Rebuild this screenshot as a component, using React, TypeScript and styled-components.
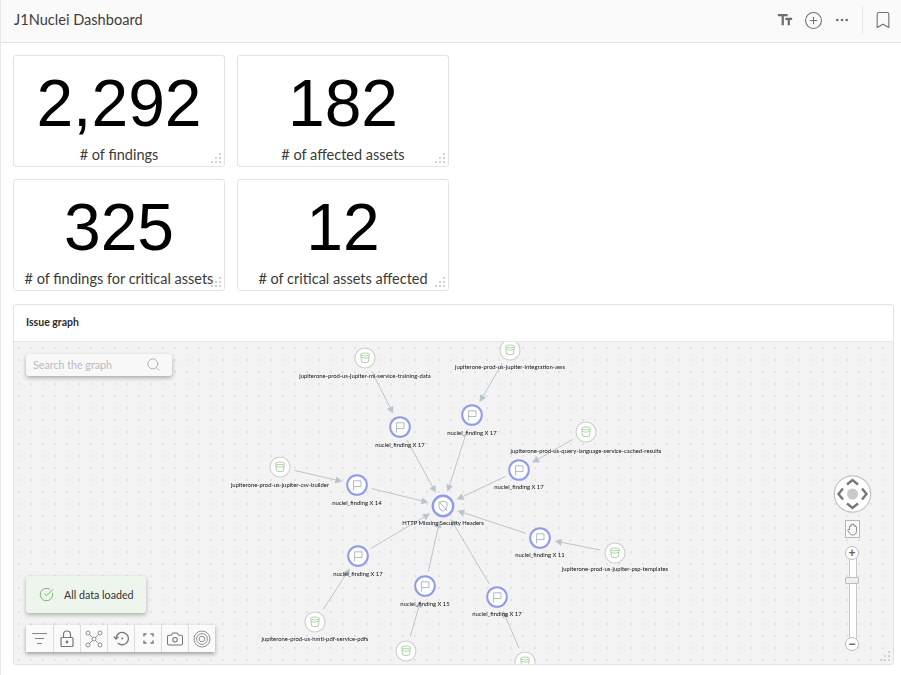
import { ReactNode } from 'react';
import styled, { createGlobalStyle } from 'styled-components';
import { Bookmark, Camera, CircleCheckBig, CirclePlus, Ellipsis, ListFilter, Search } from 'lucide-react';
import { MdTextFields } from 'react-icons/md';

const GlobalStyle = createGlobalStyle`
  html, body {
    margin: 0;
    padding: 0;
    background: #fff;
    font-family: Lato, "Open Sans", sans-serif;
    color: #333;
  }
  * { box-sizing: border-box; }
`;

const Page = styled.div`
  width: 901px;
  height: 675px;
  overflow: hidden;
  border-left: 1px solid #e8e8e8;
`;

const Header = styled.header`
  height: 43px;
  background: #fafafa;
  border-bottom: 1px solid #e2e2e2;
  display: flex;
  align-items: center;
  padding: 0 8px 2px 13px;
`;

const Title = styled.h1`
  flex: 1;
  margin: 0 0 1px;
  font-size: 14.6px;
  font-weight: 400;
  color: #3d3d3d;
`;

const HeaderActions = styled.div`
  display: flex;
  align-items: center;
  color: #6f6f6f;
`;

const HeaderAction = styled.span<{ $gap: number }>`
  display: flex;
  margin-right: ${(p) => p.$gap}px;
`;

const HeaderDivider = styled.span`
  width: 1px;
  height: 26px;
  background: #e2e2e2;
  margin-right: 10px;
`;

const Content = styled.main`
  padding: 12px 0 0 12px;
`;

const CardGrid = styled.section`
  display: grid;
  grid-template-columns: 212px 212px;
  grid-auto-rows: 112px;
  gap: 12px;
`;

const Card = styled.article`
  position: relative;
  border: 1px solid #e3e3e3;
  border-radius: 3px;
  background: #fff;
  display: flex;
  flex-direction: column;
  align-items: center;
  padding-top: 14px;
`;

const CardValue = styled.div`
  font-family: "Liberation Sans", Arial, sans-serif;
  font-size: 66px;
  line-height: 66px;
  color: #000;
`;

const CardLabel = styled.div`
  margin-top: 9px;
  font-size: 14.5px;
  line-height: 20px;
  color: #3a3a3a;
  white-space: nowrap;
`;

const ResizeMark = styled.svg`
  position: absolute;
  right: 3px;
  bottom: 3px;
  width: 10px;
  height: 10px;
  color: #cfd0dc;
`;

const GraphPanel = styled.section`
  position: relative;
  width: 881px;
  height: 361px;
  margin-top: 13px;
  border: 1px solid #e3e3e3;
  border-radius: 3px;
  overflow: hidden;
`;

const PanelHeading = styled.h2`
  height: 37px;
  margin: 0;
  padding: 0 12px;
  font-size: 10.5px;
  font-weight: 700;
  line-height: 34px;
  color: #2d2d2d;
  border-bottom: 1px solid #e6e6e6;
`;

const Canvas = styled.div`
  position: relative;
  height: 322px;
  background-color: #f3f3f3;
  background-image: radial-gradient(circle, #e3e3e3 0.8px, transparent 1px);
  background-size: 12px 12px;
  background-position: 11px 0;
  overflow: hidden;
`;

const GraphSvg = styled.svg`
  display: block;
  width: 879px;
  height: 322px;
  filter: blur(0.3px);
`;

const NodeLabel = styled.text`
  font-family: Lato, sans-serif;
  font-size: 5.9px;
  fill: #111;
  text-anchor: middle;
`;

const SearchBox = styled.div`
  position: absolute;
  left: 12px;
  top: 12px;
  width: 146px;
  height: 22px;
  display: flex;
  align-items: center;
  justify-content: space-between;
  padding: 0 11px 2px 7px;
  background: #f8f8f8;
  border-radius: 3px;
  box-shadow: 0 2px 4px rgba(0, 0, 0, 0.3);
  font-size: 10.7px;
  color: #b9bcc0;
`;

const Toast = styled.div`
  position: absolute;
  left: 12px;
  top: 234px;
  width: 120px;
  height: 37px;
  display: flex;
  align-items: center;
  gap: 10px;
  padding: 0 0 1px 13px;
  background: #eef5ed;
  border-radius: 3px;
  box-shadow: 0 2px 4px rgba(0, 0, 0, 0.28);
  font-size: 10.7px;
  color: #333;
`;

const Toolbar = styled.div`
  position: absolute;
  left: 12px;
  top: 283px;
  display: flex;
  background: #fafafa;
  box-shadow: 0 2px 4px rgba(0, 0, 0, 0.35);
`;

const ToolButton = styled.span`
  width: 27px;
  height: 27px;
  display: flex;
  align-items: center;
  justify-content: center;
  color: #777;
  border-left: 1px solid #dcdcdc;
  &:first-child { border-left: none; }
`;

const NavControls = styled.div`
  position: absolute;
  right: 21px;
  top: 133px;
  width: 40px;
  display: flex;
  flex-direction: column;
  align-items: center;
`;

const HandBox = styled.span`
  width: 15px;
  height: 18px;
  margin-top: 7px;
  display: flex;
  align-items: center;
  justify-content: center;
  border: 1px solid #b8b8b8;
  background: #f8f8f8;
`;

const ZoomSlider = styled.div`
  position: relative;
  height: 105px;
  width: 14px;
  margin-top: 8px;
  display: flex;
  flex-direction: column;
  align-items: center;
  justify-content: space-between;
  &::before {
    content: '';
    position: absolute;
    top: 6px;
    bottom: 6px;
    left: 4px;
    width: 6px;
    background: #fff;
    border: 1px solid #c8c8c8;
    border-width: 0 1px;
  }
`;

const ZoomButton = styled.span`
  position: relative;
  width: 14px;
  height: 14px;
  border-radius: 50%;
  border: 1px solid #bdbdbd;
  background: #fff;
  display: flex;
  align-items: center;
  justify-content: center;
  font-family: "Liberation Sans", sans-serif;
  font-size: 12px;
  line-height: 1;
  font-weight: 700;
  color: #666;
`;

const ZoomThumb = styled.span`
  position: absolute;
  left: 0;
  top: 31px;
  width: 14px;
  height: 7px;
  background: #eee;
  border: 1px solid #bdbdbd;
  border-radius: 1px;
`;

type NodeKind = 'bucket' | 'finding' | 'issue';

type GraphNode = {
  id: string;
  kind: NodeKind;
  x: number;
  y: number;
  label?: string;
  labelY?: number;
};

const nodes: GraphNode[] = [
  { id: 'issue', kind: 'issue', x: 443, y: 506, label: 'HTTP Missing Security Headers', labelY: 523 },
  { id: 'f1', kind: 'finding', x: 400, y: 427, label: 'nuclei_finding X 17', labelY: 445 },
  { id: 'f2', kind: 'finding', x: 472, y: 415, label: 'nuclei_finding X 17', labelY: 433 },
  { id: 'f3', kind: 'finding', x: 519, y: 470, label: 'nuclei_finding X 17', labelY: 487 },
  { id: 'f4', kind: 'finding', x: 357, y: 485, label: 'nuclei_finding X 14', labelY: 503 },
  { id: 'f5', kind: 'finding', x: 540, y: 538, label: 'nuclei_finding X 11', labelY: 555 },
  { id: 'f6', kind: 'finding', x: 358, y: 556, label: 'nuclei_finding X 17', labelY: 574 },
  { id: 'f7', kind: 'finding', x: 425, y: 586, label: 'nuclei_finding X 15', labelY: 604 },
  { id: 'f8', kind: 'finding', x: 497, y: 597, label: 'nuclei_finding X 17', labelY: 614 },
  { id: 'b1', kind: 'bucket', x: 365, y: 358, label: 'jupiterone-prod-us-jupiter-ml-service-training-data', labelY: 376 },
  { id: 'b2', kind: 'bucket', x: 510, y: 350, label: 'jupiterone-prod-us-jupiter-integration-aws', labelY: 367 },
  { id: 'b3', kind: 'bucket', x: 586, y: 432, label: 'jupiterone-prod-us-query-language-service-cached-results', labelY: 451 },
  { id: 'b4', kind: 'bucket', x: 280, y: 467, label: 'jupiterone-prod-us-jupiter-csv-builder', labelY: 485 },
  { id: 'b5', kind: 'bucket', x: 615, y: 553, label: 'jupiterone-prod-us-jupiter-psp-templates', labelY: 569 },
  { id: 'b6', kind: 'bucket', x: 315, y: 622, label: 'jupiterone-prod-us-hmtl-pdf-service-pdfs', labelY: 639 },
  { id: 'b7', kind: 'bucket', x: 406, y: 651 },
  { id: 'b8', kind: 'bucket', x: 525, y: 662 },
];

const edges: [string, string][] = [
  ['b1', 'f1'], ['b2', 'f2'], ['b3', 'f3'], ['b4', 'f4'],
  ['b5', 'f5'], ['b6', 'f6'], ['b7', 'f7'], ['b8', 'f8'],
  ['f1', 'issue'], ['f2', 'issue'], ['f3', 'issue'], ['f4', 'issue'],
  ['f5', 'issue'], ['f6', 'issue'], ['f7', 'issue'], ['f8', 'issue'],
];

const nodeById = (id: string) => nodes.find((n) => n.id === id) as GraphNode;

const Edge = ({ from, to }: { from: GraphNode; to: GraphNode }) => {
  const dx = to.x - from.x;
  const dy = to.y - from.y;
  const len = Math.hypot(dx, dy);
  const ux = dx / len;
  const uy = dy / len;
  const x1 = from.x + ux * 15;
  const y1 = from.y + uy * 15;
  const tipX = to.x - ux * 15;
  const tipY = to.y - uy * 15;
  const baseX = tipX - ux * 7;
  const baseY = tipY - uy * 7;
  const arrow = `${tipX},${tipY} ${baseX - uy * 3.5},${baseY + ux * 3.5} ${baseX + uy * 3.5},${baseY - ux * 3.5}`;
  return (
    <g>
      <line x1={x1} y1={y1} x2={baseX} y2={baseY} stroke="#b9c5cd" strokeWidth={1} />
      <polygon points={arrow} fill="#b9c5cd" />
    </g>
  );
};

const BucketGlyph = () => (
  <g fill="none" stroke="#8fc482" strokeWidth={0.7}>
    <ellipse cx={0} cy={-3.6} rx={4.4} ry={1.4} />
    <path d="M-4.4 -3.6 L-3.4 4 Q0 5.4 3.4 4 L4.4 -3.6" />
    <path d="M-4 -0.6 Q0 1 4 -0.6" />
  </g>
);

const FlagGlyph = () => (
  <g fill="none" stroke="#9aa8b5" strokeWidth={0.8}>
    <path d="M-3.4 5.5 V-4.2 H4 V1.6 H-3.4" />
  </g>
);

const IssueGlyph = () => (
  <g fill="none" stroke="#98a1ab" strokeWidth={0.8}>
    <path d="M0 -5 L4 -3.4 V0.4 Q4 3.6 0 5.2 Q-4 3.6 -4 0.4 V-3.4 Z" />
    <path d="M-4.2 -4.6 L4.2 4.8" />
  </g>
);

const Node = ({ node }: { node: GraphNode }) => {
  const t = `translate(${node.x} ${node.y})`;
  return (
    <g>
      {node.kind === 'bucket' && (
        <g transform={t}>
          <circle r={10} fill="#fff" stroke="#cdcfcd" strokeWidth={1.1} />
          <BucketGlyph />
        </g>
      )}
      {node.kind === 'finding' && (
        <g transform={t}>
          <circle cx={-1.5} r={10} fill="#fff" stroke="#e6e6e6" strokeWidth={0.6} />
          <circle r={9.8} fill="#fff" stroke="#8f9bea" strokeWidth={2} />
          <FlagGlyph />
        </g>
      )}
      {node.kind === 'issue' && (
        <g transform={t}>
          <circle r={10.2} fill="#fff" stroke="#8f9bea" strokeWidth={2.4} />
          <IssueGlyph />
        </g>
      )}
      {node.label && (
        <NodeLabel x={node.x} y={(node.labelY as number) + 2}>
          {node.label}
        </NodeLabel>
      )}
    </g>
  );
};

const Handle = () => (
  <ResizeMark viewBox="0 0 10 10">
    <g fill="currentColor">
      <rect x="8" y="0" width="2" height="2" />
      <rect x="4" y="4" width="2" height="2" />
      <rect x="8" y="4" width="2" height="2" />
      <rect x="0" y="8" width="2" height="2" />
      <rect x="4" y="8" width="2" height="2" />
      <rect x="8" y="8" width="2" height="2" />
    </g>
  </ResizeMark>
);

const LockIcon = () => (
  <svg width="16" height="18" viewBox="0 0 16 18" fill="none" stroke="currentColor" strokeWidth="1.2">
    <rect x="2" y="7.5" width="12" height="9" rx="1" />
    <path d="M4.5 7.5V4.5a3.5 3.5 0 0 1 7 0v3" />
    <circle cx="8" cy="12" r="0.8" fill="currentColor" />
  </svg>
);

const NetworkIcon = () => (
  <svg width="18" height="18" viewBox="0 0 18 18" fill="none" stroke="currentColor" strokeWidth="0.8">
    <circle cx="9" cy="9" r="2" />
    <circle cx="3" cy="3" r="2" />
    <circle cx="15" cy="3" r="2" />
    <circle cx="3" cy="15" r="2" />
    <circle cx="15" cy="15" r="2" />
    <path d="M4.5 4.500 7.600 7.600M13.500 4.500 10.400 7.600M4.500 13.500 7.600 10.400M13.500 13.500 10.400 10.400" />
  </svg>
);

const ResetIcon = () => (
  <svg width="17" height="17" viewBox="0 0 17 17" fill="none" stroke="currentColor" strokeWidth="1.3">
    <path d="M3 8.5a6.2 6.2 0 1 1 1.9 4.5" />
    <path d="M0.8 6.6 3 9l2.4-2.2" />
    <circle cx="9.2" cy="8.5" r="1" fill="currentColor" stroke="none" />
  </svg>
);

const FrameIcon = () => (
  <svg width="11" height="11" viewBox="0 0 11 11" fill="none" stroke="currentColor" strokeWidth="1.4">
    <path d="M1 3.500V1h2.500M7.500 1H10v2.500M10 7.500V10H7.500M3.500 10H1V7.500" />
  </svg>
);

const TargetIcon = () => (
  <svg width="18" height="18" viewBox="0 0 18 18" fill="none" stroke="currentColor" strokeWidth="0.8">
    <circle cx="9" cy="9" r="8" />
    <circle cx="9" cy="9" r="5.4" />
    <circle cx="9" cy="9" r="2.8" />
  </svg>
);

const PanIcon = () => (
  <svg width="39" height="38" viewBox="0 0 38 38" fill="none">
    <circle cx="19" cy="19" r="18.2" fill="#fff" stroke="#c4c4c4" strokeWidth="1.2" />
    <circle cx="19" cy="19" r="5.5" fill="#c9c9c9" />
    <g stroke="#777" strokeWidth="2.4">
      <path d="M13.500 9.500 19 5l5.500 4.500" />
      <path d="M13.500 28.500 19 33l5.500-4.500" />
      <path d="M9.500 13.500 5 19l4.500 5.500" />
      <path d="M28.500 13.500 33 19l-4.500 5.500" />
    </g>
  </svg>
);

const HandIcon = () => (
  <svg width="11" height="13" viewBox="0 0 11 13" fill="none" stroke="#777" strokeWidth="0.8">
    <path d="M2.500 7V3.500a.7.7 0 0 1 1.400 0V2a.7.7 0 0 1 1.400 0v-.2a.7.7 0 0 1 1.400 0V2.500a.7.7 0 0 1 1.400 0V4a.7.7 0 0 1 1.400 0v4c0 2.500-1.500 4-3.500 4S3 11 2 9.500L.8 7.500c-.5-.8.6-1.500 1.200-.8z" />
  </svg>
);

const cards: { value: string; label: string }[] = [
  { value: '2,292', label: '# of findings' },
  { value: '182', label: '# of affected assets' },
  { value: '325', label: '# of findings for critical assets' },
  { value: '12', label: '# of critical assets affected' },
];

const tools: ReactNode[] = [
  <ListFilter key="filter" size={17} strokeWidth={1.3} />,
  <LockIcon key="lock" />,
  <NetworkIcon key="network" />,
  <ResetIcon key="reset" />,
  <FrameIcon key="frame" />,
  <Camera key="camera" size={18} strokeWidth={1.4} />,
  <TargetIcon key="target" />,
];

const App = () => (
  <Page>
    <GlobalStyle />
    <Header>
      <Title>J1Nuclei Dashboard</Title>
      <HeaderActions>
        <HeaderAction $gap={10}>
          <MdTextFields size={18} />
        </HeaderAction>
        <HeaderAction $gap={11}>
          <CirclePlus size={19} strokeWidth={1.3} />
        </HeaderAction>
        <HeaderAction $gap={12}>
          <Ellipsis size={16} strokeWidth={2} />
        </HeaderAction>
        <HeaderDivider />
        <HeaderAction $gap={0}>
          <Bookmark size={20} strokeWidth={1.3} />
        </HeaderAction>
      </HeaderActions>
    </Header>
    <Content>
      <CardGrid>
        {cards.map((card) => (
          <Card key={card.label}>
            <CardValue>{card.value}</CardValue>
            <CardLabel>{card.label}</CardLabel>
            <Handle />
          </Card>
        ))}
      </CardGrid>
      <GraphPanel>
        <PanelHeading>Issue graph</PanelHeading>
        <Canvas>
          <GraphSvg viewBox="14 342 879 322">
            {edges.map(([a, b]) => (
              <Edge key={a + b} from={nodeById(a)} to={nodeById(b)} />
            ))}
            {nodes.map((n) => (
              <Node key={n.id} node={n} />
            ))}
          </GraphSvg>
          <SearchBox>
            Search the graph
            <Search size={15} strokeWidth={1.2} color="#9aa0a6" />
          </SearchBox>
          <Toast>
            <CircleCheckBig size={15} strokeWidth={1.4} color="#66b35a" />
            All data loaded
          </Toast>
          <Toolbar>
            {tools.map((icon, i) => (
              <ToolButton key={i}>{icon}</ToolButton>
            ))}
          </Toolbar>
          <NavControls>
            <PanIcon />
            <HandBox>
              <HandIcon />
            </HandBox>
            <ZoomSlider>
              <ZoomButton>+</ZoomButton>
              <ZoomThumb />
              <ZoomButton>−</ZoomButton>
            </ZoomSlider>
          </NavControls>
          <Handle />
        </Canvas>
      </GraphPanel>
    </Content>
  </Page>
);

export default App;
